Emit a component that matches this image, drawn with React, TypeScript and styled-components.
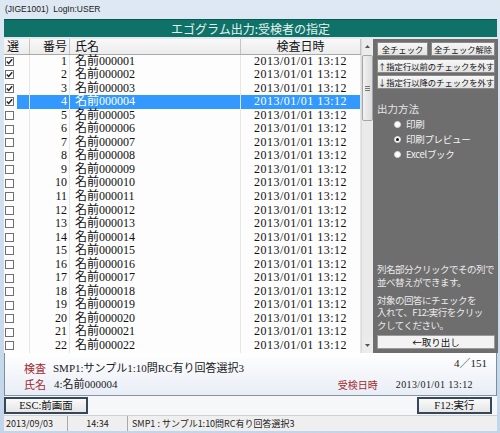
import React from "react";
import styled, { createGlobalStyle } from "styled-components";

const JP = `"Noto Sans CJK JP", "Liberation Sans", sans-serif`;
const MIN = `"Liberation Serif", "Noto Sans CJK JP", serif`;
const COLS = "26px 40px 171px 120px";

const GlobalStyle = createGlobalStyle`
  html, body { margin: 0; padding: 0; }
  body { width: 500px; height: 433px; overflow: hidden; background: #c5d7ea; }
  * { box-sizing: border-box; }
`;

const Window = styled.div`
  width: 500px;
  height: 433px;
  display: flex;
  flex-direction: column;
  padding: 0 3px 2px 4px;
  background: linear-gradient(#dde8f3, #c2d5ea);
`;

const TitleBar = styled.div`
  height: 19px;
  flex: none;
  font: 8.5px/19px "Liberation Sans", sans-serif;
  color: #1a1a1a;
  padding-left: 1px;
  white-space: pre;
`;

const Banner = styled.div`
  height: 18px;
  flex: none;
  background: #0f7268;
  color: #e6f3f1;
  font: 12px/17px ${JP};
  text-align: center;
  border-top: 1px solid #0a5750;
`;

const Main = styled.div`
  height: 316px;
  flex: none;
  display: flex;
  border-top: 2px solid #e4e8ee;
`;

const TableArea = styled.div`
  width: 369px;
  flex: none;
  display: flex;
  background: #fdfdfd;
`;

const TableBody = styled.div`
  width: 357px;
  display: flex;
  flex-direction: column;
`;

const HeaderRow = styled.div`
  display: grid;
  grid-template-columns: ${COLS};
  height: 15.5px;
  flex: none;
  background: linear-gradient(#f8f8f8, #ececec);
  border-bottom: 1px solid #a9a9a9;
  font: 12px/14.5px ${JP};
  color: #111;
`;

const HeadCell = styled.div<{ $align: string; $pad: string }>`
  text-align: ${(p) => p.$align};
  padding: ${(p) => p.$pad};
  border-right: 1px solid #c4c4c4;
  white-space: nowrap;
`;

const Row = styled.div<{ $sel?: boolean }>`
  display: grid;
  grid-template-columns: ${COLS};
  height: 13.55px;
  flex: none;
  font: 12px/13.55px ${MIN};
  color: ${(p) => (p.$sel ? "#ffffff" : "#111111")};
`;

const Cell = styled.div<{ $align: string; $pad: string; $sel?: boolean; $ls?: string }>`
  text-align: ${(p) => p.$align};
  padding: ${(p) => p.$pad};
  background: ${(p) => (p.$sel ? "#3399ff" : "transparent")};
  border-right: 1px solid ${(p) => (p.$sel ? "#d6e8fb" : "#e6e6e6")};
  letter-spacing: ${(p) => p.$ls || "0"};
  white-space: nowrap;
`;

const CheckCell = styled.div<{ $sel?: boolean }>`
  display: flex;
  align-items: center;
  border-right: 1px solid ${(p) => (p.$sel ? "#d6e8fb" : "#e6e6e6")};
`;

const CheckBox = styled.span`
  width: 9px;
  height: 9px;
  margin-left: 1px;
  flex: none;
  border: 1px solid #6f6f6f;
  background: #ffffff;
  display: flex;
  align-items: center;
  justify-content: center;
`;

const SelFill = styled.span<{ $sel?: boolean }>`
  flex: 1;
  align-self: stretch;
  margin-left: 3px;
  background: ${(p) => (p.$sel ? "#3399ff" : "transparent")};
`;

const ScrollBar = styled.div`
  width: 12px;
  flex: none;
  display: flex;
  flex-direction: column;
  background: #eaeaea;
  border-left: 1px solid #dadada;
`;

const ScrollBtn = styled.div`
  height: 15px;
  flex: none;
  display: flex;
  align-items: center;
  justify-content: center;
  background: #ececec;
`;

const Thumb = styled.div`
  height: 66px;
  flex: none;
  margin: 1px 0 0 0;
  border: 1px solid #a6a6a6;
  border-radius: 2px;
  background: linear-gradient(to right, #f2f2f2, #dcdcdc);
  display: flex;
  align-items: center;
  justify-content: center;
`;

const Track = styled.div`
  flex: 1;
`;

const SidePanel = styled.div`
  flex: 1;
  display: flex;
  flex-direction: column;
  background: #6e6e6e;
  padding: 3px 3px 4px 4px;
`;

const BtnRow = styled.div`
  display: flex;
  gap: 3px;
`;

const PanelButton = styled.div<{ $w?: string; $grow?: boolean; $mt?: string }>`
  height: 14px;
  flex: ${(p) => (p.$grow ? "1" : "none")};
  width: ${(p) => p.$w || "auto"};
  margin-top: ${(p) => p.$mt || "0"};
  background: linear-gradient(#f7f7f7, #e3e3e3);
  border: 1px solid #8a8a8a;
  font: 8.3px/12px ${JP};
  color: #111;
  text-align: center;
  white-space: nowrap;
  overflow: hidden;
`;

const SectionTitle = styled.div`
  margin-top: 14px;
  font: 10.5px/12px ${JP};
  color: #e4e4e4;
`;

const RadioList = styled.div`
  margin-top: 2px;
  padding-left: 17px;
  display: flex;
  flex-direction: column;
`;

const RadioItem = styled.div`
  height: 15px;
  display: flex;
  align-items: center;
  gap: 5px;
  font: 9.5px/15px ${JP};
  letter-spacing: -0.3px;
  color: #f4f4f4;
`;

const Radio = styled.span<{ $on?: boolean }>`
  width: 7px;
  height: 7px;
  flex: none;
  border-radius: 50%;
  background: #ffffff;
  border: 1px solid #d8d8d8;
  display: flex;
  align-items: center;
  justify-content: center;
  &::after {
    content: "";
    width: 3px;
    height: 3px;
    border-radius: 50%;
    background: ${(p) => (p.$on ? "#111" : "transparent")};
  }
`;

const Spacer = styled.div`
  flex: 1;
`;

const Note = styled.div<{ $mt?: string }>`
  margin-top: ${(p) => p.$mt || "0"};
  font: 9.5px/12.5px ${JP};
  letter-spacing: -0.5px;
  color: #ebebeb;
  white-space: nowrap;
`;

const TakeButton = styled.div`
  margin-top: 4px;
  height: 14px;
  flex: none;
  background: #f3f3f3;
  border: 1px solid #9a9a9a;
  font: 9.5px/12px ${JP};
  color: #111;
  text-align: center;
`;

const Info = styled.div`
  height: 43px;
  flex: none;
  display: flex;
  justify-content: space-between;
  padding: 0 9px 0 19px;
  background: linear-gradient(#ffffff, #e8edf6);
  border-left: 1px solid #7f8c99;
  border-right: 1px solid #7f8c99;
  border-bottom: 1px solid #8592a0;
`;

const InfoLeft = styled.div`
  padding-top: 7px;
  display: flex;
  flex-direction: column;
`;

const InfoLine = styled.div<{ $gap: string }>`
  height: 16px;
  display: flex;
  align-items: center;
  gap: ${(p) => p.$gap};
  white-space: nowrap;
`;

const InfoLabel = styled.span<{ $size?: string }>`
  font: ${(p) => p.$size || "11px"}/16px ${JP};
  color: #a2282c;
`;

const InfoValue = styled.span<{ $size?: string; $ls?: string }>`
  font: ${(p) => p.$size || "11px"}/16px ${MIN};
  letter-spacing: ${(p) => p.$ls || "0"};
  color: #1a1a1a;
`;

const InfoRight = styled.div`
  display: flex;
  flex-direction: column;
  align-items: flex-end;
`;

const Count = styled.div`
  margin-top: 3px;
  height: 14px;
  font: 11px/14px ${MIN};
  color: #1a1a1a;
`;

const DateLine = styled(InfoLine)`
  margin-top: 7px;
  margin-right: 14px;
`;

const ButtonBar = styled.div`
  height: 19px;
  flex: none;
  display: flex;
  justify-content: space-between;
  align-items: center;
  padding: 0 5px 1px 0;
  background: #f6f7f9;
`;

const FnButton = styled.div<{ $w: string }>`
  width: ${(p) => p.$w};
  height: 17px;
  border: 2px solid #34475b;
  background: linear-gradient(#fafafa, #e6e6e6);
  font: 10.5px/13px ${MIN};
  color: #111;
  text-align: center;
  white-space: nowrap;
`;

const StatusBar = styled.div`
  height: 16px;
  flex: none;
  display: flex;
  background: #efefef;
  border-top: 1px solid #d0d0d0;
  font: 9px/15px ${JP};
  color: #222;
`;

const StatusCell = styled.div<{ $w?: string; $align?: string }>`
  width: ${(p) => p.$w || "auto"};
  flex: ${(p) => (p.$w ? "none" : "1")};
  text-align: ${(p) => p.$align || "left"};
  padding-left: ${(p) => (p.$align === "center" ? "0" : "2px")};
  border-right: 1px solid #a9a9a9;
  white-space: nowrap;
  overflow: hidden;
  &:last-child { border-right: none; padding-left: 4px; }
`;

const Check = () => (
  <svg width="7" height="7" viewBox="0 0 7 7">
    <path d="M0.8 3.4 L2.7 5.4 L6.2 1.2" fill="none" stroke="#222" strokeWidth="1.4" />
  </svg>
);

const UpArrow = () => (
  <svg width="5" height="3" viewBox="0 0 5 3">
    <path d="M0 3 L2.5 0 L5 3 Z" fill="#555" />
  </svg>
);

const DownArrow = () => (
  <svg width="5" height="3" viewBox="0 0 5 3">
    <path d="M0 0 L2.5 3 L5 0 Z" fill="#555" />
  </svg>
);

const Grip = () => (
  <svg width="5" height="5" viewBox="0 0 5 5">
    <path d="M0 0.5 H5 M0 2.5 H5 M0 4.5 H5" stroke="#777" strokeWidth="1" />
  </svg>
);

const rows = Array.from({ length: 22 }, (_, i) => ({
  no: i + 1,
  name: String(i + 1).padStart(6, "0"),
  date: "2013/01/01 13:12",
  checked: i < 4,
  sel: i === 3,
}));

export default function App() {
  return (
    <>
      <GlobalStyle />
      <Window>
        <TitleBar>(JIGE1001)  LogIn:USER</TitleBar>
        <Banner>エゴグラム出力:受検者の指定</Banner>
        <Main>
          <TableArea>
            <TableBody>
              <HeaderRow>
                <HeadCell $align="left" $pad="0 0 0 3px">選</HeadCell>
                <HeadCell $align="right" $pad="0 2px 0 0">番号</HeadCell>
                <HeadCell $align="left" $pad="0 0 0 5px">氏名</HeadCell>
                <HeadCell $align="center" $pad="0">検査日時</HeadCell>
              </HeaderRow>
              {rows.map((r) => (
                <Row key={r.no} $sel={r.sel}>
                  <CheckCell $sel={r.sel}>
                    <CheckBox>{r.checked && <Check />}</CheckBox>
                    <SelFill $sel={r.sel} />
                  </CheckCell>
                  <Cell $align="right" $pad="0 2px 0 0" $sel={r.sel}>
                    {r.no}
                  </Cell>
                  <Cell $align="left" $pad="0 0 0 5px" $sel={r.sel}>
                    名前{r.name}
                  </Cell>
                  <Cell $align="center" $pad="0" $sel={r.sel} $ls="0.5px">
                    {r.date}
                  </Cell>
                </Row>
              ))}
            </TableBody>
            <ScrollBar>
              <ScrollBtn>
                <UpArrow />
              </ScrollBtn>
              <Thumb>
                <Grip />
              </Thumb>
              <Track />
              <ScrollBtn>
                <DownArrow />
              </ScrollBtn>
            </ScrollBar>
          </TableArea>
          <SidePanel>
            <BtnRow>
              <PanelButton $w="51px">全チェック</PanelButton>
              <PanelButton $grow>全チェック解除</PanelButton>
            </BtnRow>
            <PanelButton $mt="3px">↑指定行以前のチェックを外す</PanelButton>
            <PanelButton $mt="2px">↓指定行以降のチェックを外す</PanelButton>
            <SectionTitle>出力方法</SectionTitle>
            <RadioList>
              <RadioItem>
                <Radio />
                印刷
              </RadioItem>
              <RadioItem>
                <Radio $on />
                印刷プレビュー
              </RadioItem>
              <RadioItem>
                <Radio />
                Excelブック
              </RadioItem>
            </RadioList>
            <Spacer />
            <Note>
              列名部分クリックでその列で
              <br />
              並べ替えができます。
            </Note>
            <Note $mt="5.5px">
              対象の回答にチェックを
              <br />
              入れて、F12:実行をクリッ
              <br />
              クしてください。
            </Note>
            <TakeButton>←取り出し</TakeButton>
          </SidePanel>
        </Main>
        <Info>
          <InfoLeft>
            <InfoLine $gap="7px">
              <InfoLabel>検査</InfoLabel>
              <InfoValue>SMP1:サンプル1:10問RC有り回答選択3</InfoValue>
            </InfoLine>
            <InfoLine $gap="8px">
              <InfoLabel>氏名</InfoLabel>
              <InfoValue>4:名前000004</InfoValue>
            </InfoLine>
          </InfoLeft>
          <InfoRight>
            <Count>4／151</Count>
            <DateLine $gap="18px">
              <InfoLabel $size="10px">受検日時</InfoLabel>
              <InfoValue $size="10px" $ls="0.4px">2013/01/01 13:12</InfoValue>
            </DateLine>
          </InfoRight>
        </Info>
        <ButtonBar>
          <FnButton $w="84px">ESC:前画面</FnButton>
          <FnButton $w="75px">F12:実行</FnButton>
        </ButtonBar>
        <StatusBar>
          <StatusCell $w="64px">2013/09/03</StatusCell>
          <StatusCell $w="60px" $align="center">14:34</StatusCell>
          <StatusCell>SMP1 : サンプル1:10問RC有り回答選択3</StatusCell>
        </StatusBar>
      </Window>
    </>
  );
}
